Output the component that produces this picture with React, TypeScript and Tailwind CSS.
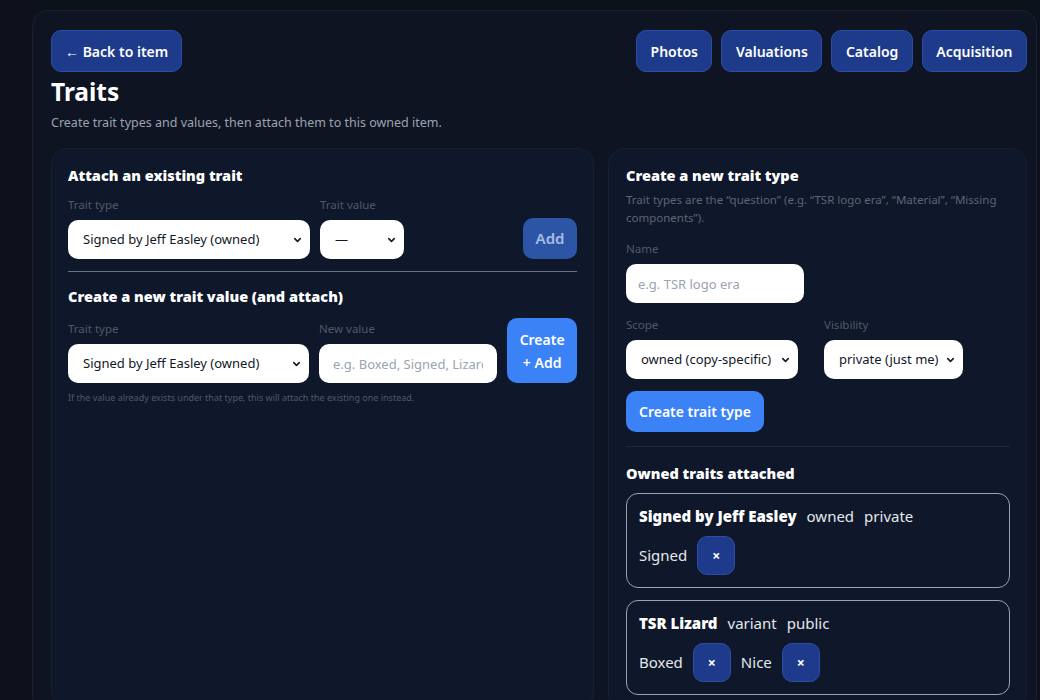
import React from 'react';
import { ChevronDown } from 'lucide-react';

const font = { fontFamily: '"Noto Sans", "Open Sans", Arial, sans-serif' };

const Select: React.FC<{ value: string; className?: string }> = ({ value, className = '' }) => (
  <div className={`relative ${className}`}>
    <select
      defaultValue={value}
      className="w-full h-[39px] appearance-none rounded-[10px] bg-white pl-[15px] pr-6 text-[13px] text-[#111827] outline-none"
    >
      <option>{value}</option>
    </select>
    <ChevronDown
      size={11}
      strokeWidth={3.4}
      className="pointer-events-none absolute right-[7px] top-1/2 -translate-y-1/2 text-[#111827]"
    />
  </div>
);

const Label: React.FC<{ children: React.ReactNode }> = ({ children }) => (
  <div className="text-[11.5px] leading-4 text-[#4f5968] mb-[7px]">{children}</div>
);

const RemoveButton = () => (
  <button className="w-[38px] h-[39px] rounded-[10px] bg-[#1e3a8a] border border-[#2d4ca6] text-white text-[14px] font-bold flex items-center justify-center">
    ×
  </button>
);

const TraitCard: React.FC<{ name: string; scope: string; visibility: string; values: string[] }> = ({
  name,
  scope,
  visibility,
  values,
}) => (
  <div className="rounded-xl border-[1.5px] border-[#9aa3b2] px-3 pt-3 pb-3">
    <div className="flex items-center gap-2.5 text-[15px] leading-5 text-[#e5e7eb]">
      <span className="font-black text-white">{name}</span>
      <span>{scope}</span>
      <span>{visibility}</span>
    </div>
    <div className="mt-2.5 flex items-center gap-2.5 text-[15px] text-[#e5e7eb]">
      {values.map((v) => (
        <React.Fragment key={v}>
          <span>{v}</span>
          <RemoveButton />
        </React.Fragment>
      ))}
    </div>
  </div>
);

export default function App() {
  const navButtons = ['Photos', 'Valuations', 'Catalog', 'Acquisition'];

  return (
    <div className="min-h-screen bg-[#0c111c] pt-[10px] pl-[32px] pr-[3px]" style={font}>
      <div className="min-h-[700px] rounded-2xl border border-[#19212f] bg-[#0e1422] pl-[18px] pr-[9px] pt-[19px]">
        <div className="flex items-start justify-between">
          <button className="h-[42px] rounded-[10px] border border-[#2d4ca6] bg-[#1e3a8a] px-[13px] text-[14px] font-semibold text-white">
            ← Back to item
          </button>
          <div className="flex gap-[9px]">
            {navButtons.map((b) => (
              <button
                key={b}
                className="h-[42px] rounded-[10px] border border-[#2d4ca6] bg-[#1e3a8a] px-[13.5px] text-[14px] font-semibold text-white"
              >
                {b}
              </button>
            ))}
          </div>
        </div>

        <h1 className="mt-1 text-[24.5px] leading-8 font-bold text-white">Traits</h1>
        <p className="mt-1.5 text-[12.5px] leading-[18px] text-[#9ca3af]">
          Create trait types and values, then attach them to this owned item.
        </p>

        <div className="mt-4 grid grid-cols-[543px_1fr] gap-[14px] items-start">
          {/* left column */}
          <div className="min-h-[560px] rounded-2xl border border-[#162033] bg-[#0f172a] p-4">
            <h2 className="text-[14.5px] leading-5 font-black text-white">Attach an existing trait</h2>
            <div className="mt-3 flex items-end gap-[10px]">
              <div className="w-[242px]">
                <Label>Trait type</Label>
                <Select value="Signed by Jeff Easley (owned)" />
              </div>
              <div className="w-[84px]">
                <Label>Trait value</Label>
                <Select value="—" />
              </div>
              <button className="ml-auto h-[41px] w-[54px] rounded-[10px] bg-[#2c55a6] text-[15px] font-semibold text-[#a9bde6]">
                Add
              </button>
            </div>

            <div className="mt-3 border-t-[1.5px] border-[#64748b]" />

            <h2 className="mt-3.5 text-[14.5px] leading-5 font-black text-white">
              Create a new trait value (and attach)
            </h2>
            <div className="mt-3 flex items-end gap-[10px]">
              <div className="w-[242px]">
                <Label>Trait type</Label>
                <Select value="Signed by Jeff Easley (owned)" />
              </div>
              <div className="w-[179px]">
                <Label>New value</Label>
                <input
                  placeholder="e.g. Boxed, Signed, Lizard logo"
                  className="w-full h-[39px] rounded-[10px] bg-white px-[14px] text-[13px] text-[#111827] placeholder:text-[#9ca3af] outline-none"
                />
              </div>
              <button className="h-[65px] w-[70px] rounded-[10px] bg-[#3b82f6] text-[14px] leading-[23px] font-semibold text-white">
                Create
                <br />+ Add
              </button>
            </div>
            <p className="mt-2 text-[9px] leading-[14px] text-[#4f5968]">
              If the value already exists under that type, this will attach the existing one instead.
            </p>
          </div>

          {/* right column */}
          <div className="rounded-2xl border border-[#162033] bg-[#0f172a] pl-[17px] pr-4 pt-4 pb-4">
            <h2 className="text-[14.5px] leading-5 font-black text-white">Create a new trait type</h2>
            <p className="mt-1.5 text-[11.5px] leading-[18px] text-[#5d6676]">
              Trait types are the “question” (e.g. “TSR logo era”, “Material”, “Missing components”).
            </p>

            <div className="mt-3.5">
              <Label>Name</Label>
              <input
                placeholder="e.g. TSR logo era"
                className="w-[178px] h-[39px] rounded-[10px] bg-white px-3 text-[13px] text-[#111827] placeholder:text-[#9ca3af] outline-none"
              />
            </div>

            <div className="mt-3.5 grid grid-cols-2 gap-3">
              <div>
                <Label>Scope</Label>
                <Select value="owned (copy-specific)" className="w-[172px]" />
              </div>
              <div>
                <Label>Visibility</Label>
                <Select value="private (just me)" className="w-[139px]" />
              </div>
            </div>

            <button className="mt-3 h-[41px] rounded-[10px] bg-[#3b82f6] px-[13px] text-[14px] font-semibold text-white">
              Create trait type
            </button>

            <div className="mt-3.5 border-t border-[#1e293b]" />

            <h2 className="mt-4 text-[14.5px] leading-5 font-black text-white">Owned traits attached</h2>

            <div className="mt-[10px] flex flex-col gap-3">
              <TraitCard name="Signed by Jeff Easley" scope="owned" visibility="private" values={['Signed']} />
              <TraitCard name="TSR Lizard" scope="variant" visibility="public" values={['Boxed', 'Nice']} />
            </div>
          </div>
        </div>
      </div>
    </div>
  );
}
